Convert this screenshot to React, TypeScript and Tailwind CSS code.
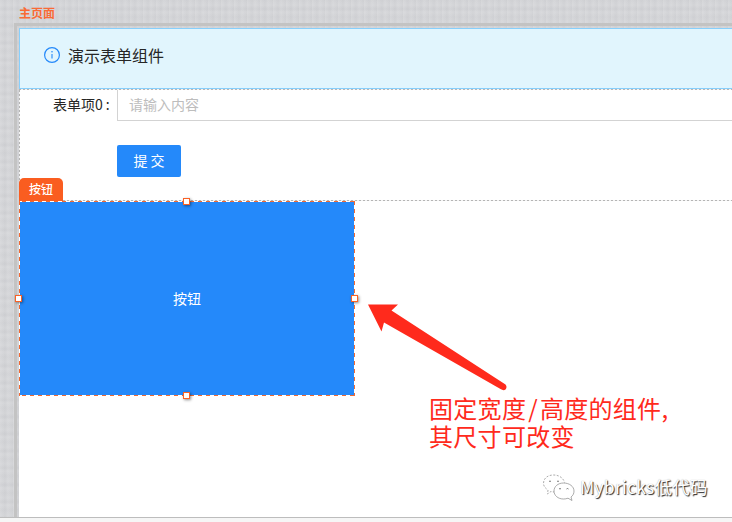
import React from "react";

const texture =
  "bg-[#d3d4d7] bg-[repeating-linear-gradient(90deg,rgba(255,255,255,.1)_0px,rgba(255,255,255,0)_3px,rgba(110,110,120,.03)_5px,rgba(255,255,255,.08)_8px,rgba(110,110,120,.03)_13px),repeating-linear-gradient(0deg,rgba(255,255,255,.08)_0px,rgba(110,110,120,.04)_3px,rgba(255,255,255,.06)_7px,rgba(110,110,120,.02)_12px,rgba(255,255,255,.08)_17px)]";

const dotsX =
  "bg-[repeating-linear-gradient(90deg,#b5b5b5_0px,#b5b5b5_2px,#f3f3f3_2px,#f3f3f3_4px)]";
const dotsY =
  "bg-[repeating-linear-gradient(0deg,#b5b5b5_0px,#b5b5b5_2px,#f3f3f3_2px,#f3f3f3_4px)]";
const dashX =
  "bg-[repeating-linear-gradient(90deg,#fff_0px,#fff_3px,#f26a33_3px,#f26a33_7px,#fff_7px,#fff_8px)]";
const dashY =
  "bg-[repeating-linear-gradient(180deg,#f26a33_0px,#f26a33_4px,#fff_4px,#fff_8px)]";

function Handle({ place }: { place: string }) {
  return (
    <span
      className={`absolute h-[7px] w-[7px] border border-[#fa6125] bg-white shadow-[1px_1px_3px_rgba(0,0,0,0.45)] ${place}`}
    />
  );
}

function InfoIcon() {
  return (
    <svg className="h-4 w-4" viewBox="0 0 16 16" fill="none" stroke="#2489fa">
      <circle cx="8" cy="8" r="7.4" strokeWidth="1.2" />
      <path d="M8 7v4.6" strokeWidth="1.1" />
      <circle cx="8" cy="4.8" r=".8" fill="#2489fa" stroke="none" />
    </svg>
  );
}

function ResizableButton() {
  return (
    <div className="relative flex h-[195px] w-[336px] items-center justify-center bg-[#2489fa] pb-[2px] text-sm text-white">
      <span>按钮</span>
      <i className={`absolute inset-x-0 top-0 h-px ${dashX}`} />
      <i className={`absolute inset-x-0 bottom-0 h-px ${dashX}`} />
      <i className={`absolute inset-y-0 left-0 w-px ${dashY}`} />
      <i className={`absolute inset-y-0 right-0 w-px ${dashY}`} />
      <span className="absolute -top-[23px] left-0 flex h-[23px] w-11 items-center justify-center rounded-t-[5px] bg-[#fa5d20] pb-px text-xs font-medium">
        按钮
      </span>
      <Handle place="-top-[3px] left-[164px]" />
      <Handle place="-bottom-[3px] left-[164px]" />
      <Handle place="top-[94px] -left-[4px]" />
      <Handle place="top-[94px] -right-[3px]" />
    </div>
  );
}

function Watermark() {
  return (
    <div className="absolute top-[471px] left-[541px] flex items-center">
      <svg className="h-8 w-[39px]" viewBox="0 0 39 32" fill="white" stroke="#888" strokeWidth=".7">
        <path
          d="M14 21c-1.500 0-3-.2-4-.6L6.500 23l.5-4C4 17 2.500 15 2.500 12.500 2.500 7 7 4 12.500 4s10 3 11 7.500"
          strokeDasharray="2 1.5"
        />
        <path d="M22.500 12c-5.500 0-9.500 3.500-9.500 8s4 8 9.500 8c1.500 0 3-.2 4.500-.8L31 29.500 30 26c2-1.500 3-3.500 3-6 0-4.500-4.500-8-10.500-8Z" />
        <path d="M8 10.500q1-1 2 0M16 10.500q1-1 2 0M18 18q1-1 2 0M25.500 18q1-1 2 0" stroke="#444" />
      </svg>
      <span className="text-[17.5px] leading-8 tracking-[.25px] whitespace-nowrap text-white [text-shadow:1px_1px_1px_#222,0px_0px_1px_#aaa]">
        Mybricks低代码
      </span>
    </div>
  );
}

export default function App() {
  return (
    <div
      className={`relative flex h-[522px] w-[732px] flex-col overflow-hidden font-['Noto_Sans_CJK_SC',sans-serif] text-[#262626] ${texture}`}
    >
      <div className="h-[23px] shrink-0 pl-[19px] text-xs leading-[26px] font-bold text-[#fa6a35]">
        主页面
      </div>
      <div className="ml-[14px] flex h-[494px] shrink-0 flex-col border-t-[3px] border-l-[3px] border-[#c3c3c3] pt-[2px] pl-[2px]">
        <main className="flex flex-1 flex-col bg-white">
          <div className="flex h-[61px] shrink-0 items-center border border-r-0 border-[#87cffc] bg-[#e1f5fd] pb-[7px] pl-6">
            <InfoIcon />
            <span className="ml-2 text-base">演示表单组件</span>
          </div>
          <div className={`h-px shrink-0 ${dotsX}`} />
          <div className="flex h-[110px] shrink-0">
            <div className={`w-px ${dotsY}`} />
            <form className="flex flex-1 flex-col text-sm">
              <div className="flex h-[31px] items-center">
                <label className="w-[97px] pb-[3px] pl-[33px] whitespace-nowrap">
                  表单项0<span className="ml-[3px]">:</span>
                </label>
                <div className="flex h-full flex-1 items-center border-b border-l border-[#d3d3d3] pb-[2px] pl-[11px] text-[#bdbdbd]">
                  请输入内容
                </div>
              </div>
              <button
                type="button"
                className="mt-6 ml-[97px] h-8 w-16 rounded-[2px] bg-[#2489fa] pb-[2px] text-white"
              >
                提 交
              </button>
            </form>
          </div>
          <div className={`h-px shrink-0 ${dotsX}`} />
          <ResizableButton />
        </main>
      </div>
      <footer className="h-[5px] shrink-0 border-t border-[#bdbdbd] bg-[#f6f6f6]" />

      <svg className="absolute top-[300px] left-[364px] h-[94px] w-[146px]" viewBox="364 300 146 94">
        <path
          d="M368 304.500 398 304.500 391.500 310.500 505.500 384.500Q507.500 387 505.500 389.500Q503.500 391 500.500 389L384 322.500 381.500 331.500Z"
          fill="#ff2a1c"
        />
      </svg>
      <div className="absolute top-[394px] left-[429px] text-2xl leading-[28px] tracking-[.3px] whitespace-nowrap text-[#ff2a1c]">
        <p>
          固定宽度<span className="mx-[2px]">/</span>高度的组件,
        </p>
        <p>其尺寸可改变</p>
      </div>
      <Watermark />
    </div>
  );
}
